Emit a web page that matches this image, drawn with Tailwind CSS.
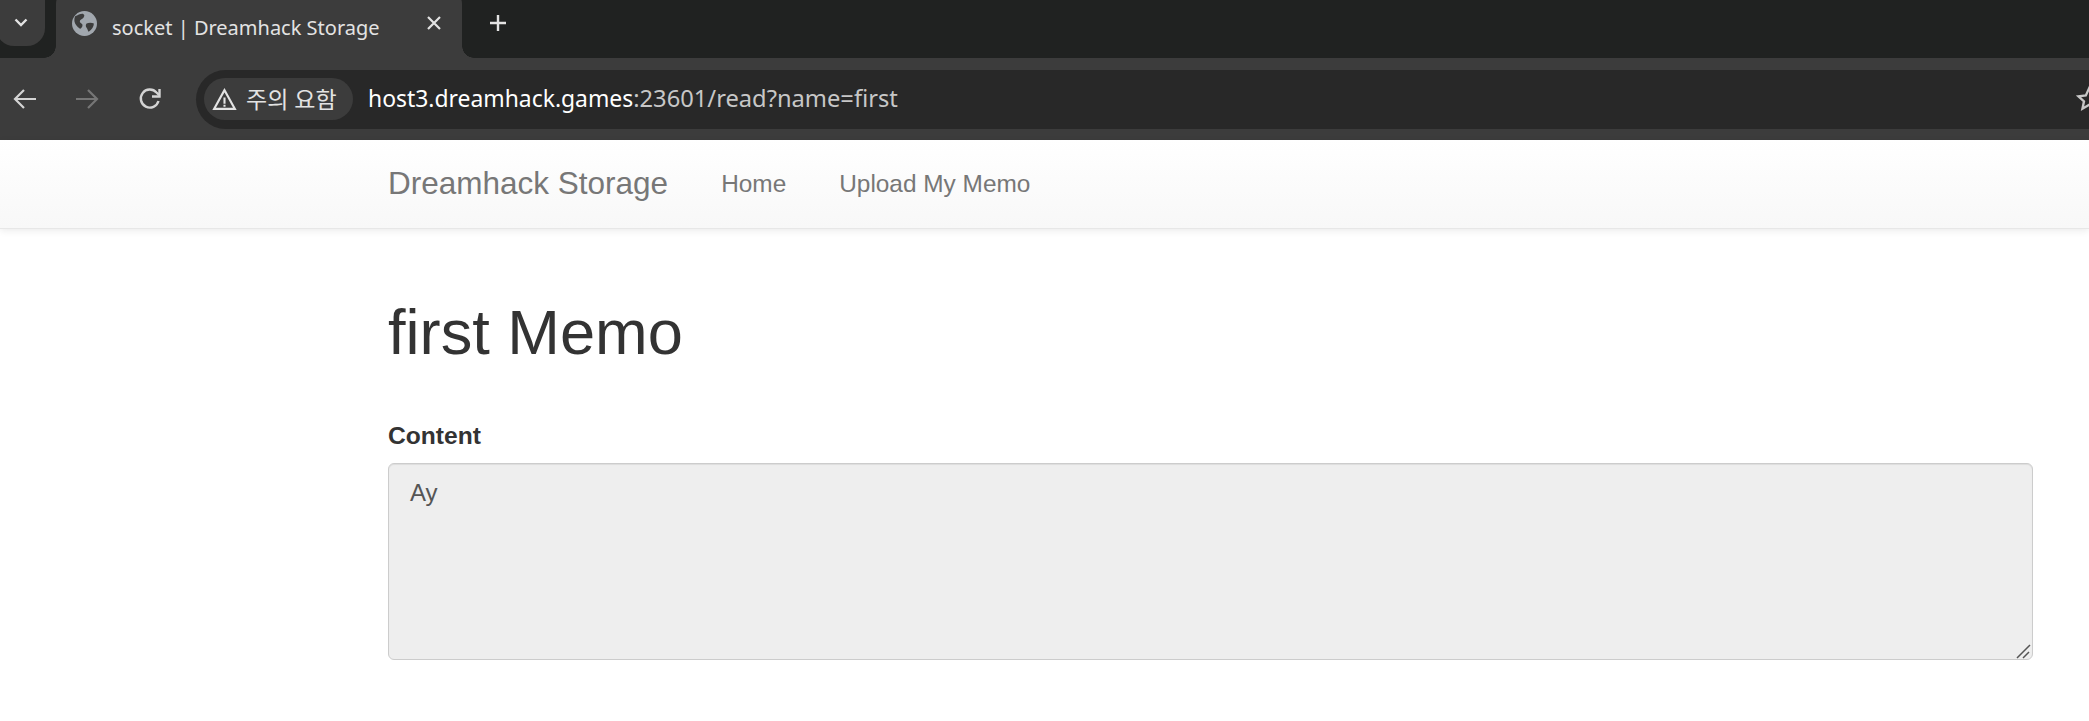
<!DOCTYPE html>
<html>
<head>
    <meta charset="utf-8">
    <title>socket | Dreamhack Storage</title>
    <script src="https://cdn.jsdelivr.net/npm/@tailwindcss/browser@4"></script>
</head>

<body class="h-[721px] overflow-hidden bg-white font-['Liberation_Sans',Arial,sans-serif]">
    <!-- browser tab strip -->
    <div class="flex h-[58px] overflow-hidden bg-[#202221] font-['Noto_Sans','Noto_Sans_CJK_KR',sans-serif]">
        <div class="-ml-1 -mt-3 flex h-[58px] w-[49px] shrink-0 items-center justify-center rounded-b-[18px] bg-[#3c3c3c] pt-3">
            <svg class="h-[18px] w-[18px]" viewBox="0 0 18 18" fill="none" stroke="#e3e3e3" stroke-width="2.400"><path d="M3.500 5.500 9 11l5.500-5.500"/></svg>
        </div>
        <div class="relative -mt-3 ml-[11px] flex h-[70px] w-[406px] shrink-0 items-center rounded-t-2xl bg-[#3c3c3c] pl-[16px] pt-3">
            <span class="absolute bottom-0 -left-3 h-3 w-3 bg-[radial-gradient(circle_at_0_0,#202221_11.500px,#3c3c3c_12px)]"></span>
            <span class="absolute bottom-0 -right-3 h-3 w-3 bg-[radial-gradient(circle_at_100%_0,#202221_11.500px,#3c3c3c_12px)]"></span>
            <svg class="mb-[12px] h-[25px] w-[25px] shrink-0" viewBox="0 0 24 24">
                <circle cx="12" cy="12" r="12" fill="#a1a7ae"/>
                <path d="M3 5c3-1 6-3 8-2 2 1 0 4-2 5-2 1-2 3 0 4 2 1 1 4-1 5-1 0-4-3-5-5-1-2-1-5 0-7zM14 12c2-1 5-1 7 0 0 3-2 6-5 8-1-1-1-3-2-4-1-1-1-3 0-4z" fill="#3c3c3c"/>
            </svg>
            <span class="mb-[3px] ml-[15px] whitespace-nowrap text-[20px] leading-none text-[#e3e3e3]">socket | Dreamhack Storage</span>
            <svg class="absolute right-[20px] top-[27px] h-[16px] w-[16px]" viewBox="0 0 16 16" stroke="#e3e3e3" stroke-width="2.200"><path d="M2 2l12 12M14 2 2 14"/></svg>
        </div>
        <svg class="ml-[26px] mt-[13px] h-[20px] w-[20px] shrink-0" viewBox="0 0 20 20" stroke="#e3e3e3" stroke-width="2.400"><path d="M10 2v16M2 10h16"/></svg>
    </div>

    <!-- browser toolbar -->
    <div class="flex h-[82px] items-center overflow-hidden bg-[#3c3c3c] font-['Noto_Sans','Noto_Sans_CJK_KR',sans-serif]">
        <svg class="ml-[13px] h-[24px] w-[24px] shrink-0" viewBox="0 0 24 24" fill="none" stroke="#d4d4d4" stroke-width="2.200"><path d="M23 12H2M11 3l-9 9 9 9"/></svg>
        <svg class="ml-[38px] h-[24px] w-[24px] shrink-0" viewBox="0 0 24 24" fill="none" stroke="#767676" stroke-width="2.200"><path d="M1 12h21M13 3l9 9-9 9"/></svg>
        <svg class="ml-[39px] h-[24px] w-[24px] shrink-0" viewBox="0 0 24 24" fill="none" stroke="#d4d4d4" stroke-width="2.400"><path d="M20.500 14a9 9 0 1 1-2-8.500L21 8"/><path d="M21.500 2v7.500H14"/></svg>
        <div class="ml-[34px] flex h-[59px] min-w-0 flex-1 items-center justify-between rounded-l-[30px] bg-[#282828] pl-[8px]">
            <div class="flex items-center">
                <div class="flex h-[42px] w-[149px] items-center rounded-full bg-[#3c3c3c] pl-[8px]">
                    <svg class="h-[25px] w-[25px] shrink-0" viewBox="0 0 24 24" fill="none" stroke="#e3e3e3" stroke-width="2"><path d="M12 3 2 21h20z"/><path d="M12 10v6M12 17v2"/></svg>
                    <span class="ml-[9px] whitespace-nowrap text-[23px] leading-none text-[#e3e3e3]">주의 요함</span>
                </div>
                <div class="ml-[15px] whitespace-nowrap text-[23.700px] leading-none text-[#c7c7c7]"><span class="text-[22.900px] text-white">host3.dreamhack.games</span>:23601/read?name=first</div>
            </div>
            <svg class="-mr-[14px] h-[28px] w-[28px] shrink-0" viewBox="0 0 24 24" fill="none" stroke="#c7c7c7" stroke-width="2"><path d="m12 3 2.700 6 6.300.700-4.700 4.300 1.300 6.300L12 17l-5.600 3.300L7.700 14 3 9.700 9.300 9z"/></svg>
        </div>
    </div>

    <!-- page navbar -->
    <nav class="h-[89px] border-b border-[#e7e7e7] bg-gradient-to-b from-white to-[#f8f8f8] pl-[388px] shadow-[0_2px_7px_rgba(0,0,0,0.08)]">
        <div class="flex h-full items-center text-[#777777]">
            <a class="whitespace-nowrap text-[31.500px] leading-none">Dreamhack Storage</a>
            <a class="ml-[53px] whitespace-nowrap text-[24.400px] leading-none">Home</a>
            <a class="ml-[53px] whitespace-nowrap text-[24.400px] leading-none">Upload My Memo</a>
        </div>
    </nav>

    <!-- memo -->
    <main class="pl-[388px] pr-[56px] text-[#333333]">
        <h1 class="mt-[68px] text-[63.200px] leading-[70px]">first Memo</h1>
        <label class="mt-[52px] block text-[24.600px] font-bold leading-[34px]">Content</label>
        <div class="relative mt-[10px] h-[197px]">
            <textarea readonly class="block h-full w-full resize-none rounded-[6px] border border-[#cccccc] bg-[#eeeeee] px-[21px] pb-[9px] pt-[12px] text-[24px] leading-[34px] text-[#555555] shadow-[inset_0_1px_1px_rgba(0,0,0,0.075)] outline-none">Ay</textarea>
            <svg class="absolute bottom-0 right-0 h-[18px] w-[18px]" viewBox="0 0 18 18" fill="none" stroke="#555555" stroke-width="1.500"><path d="M2 16 15 3M8 16l6-6"/></svg>
        </div>
    </main>
</body>
</html>
